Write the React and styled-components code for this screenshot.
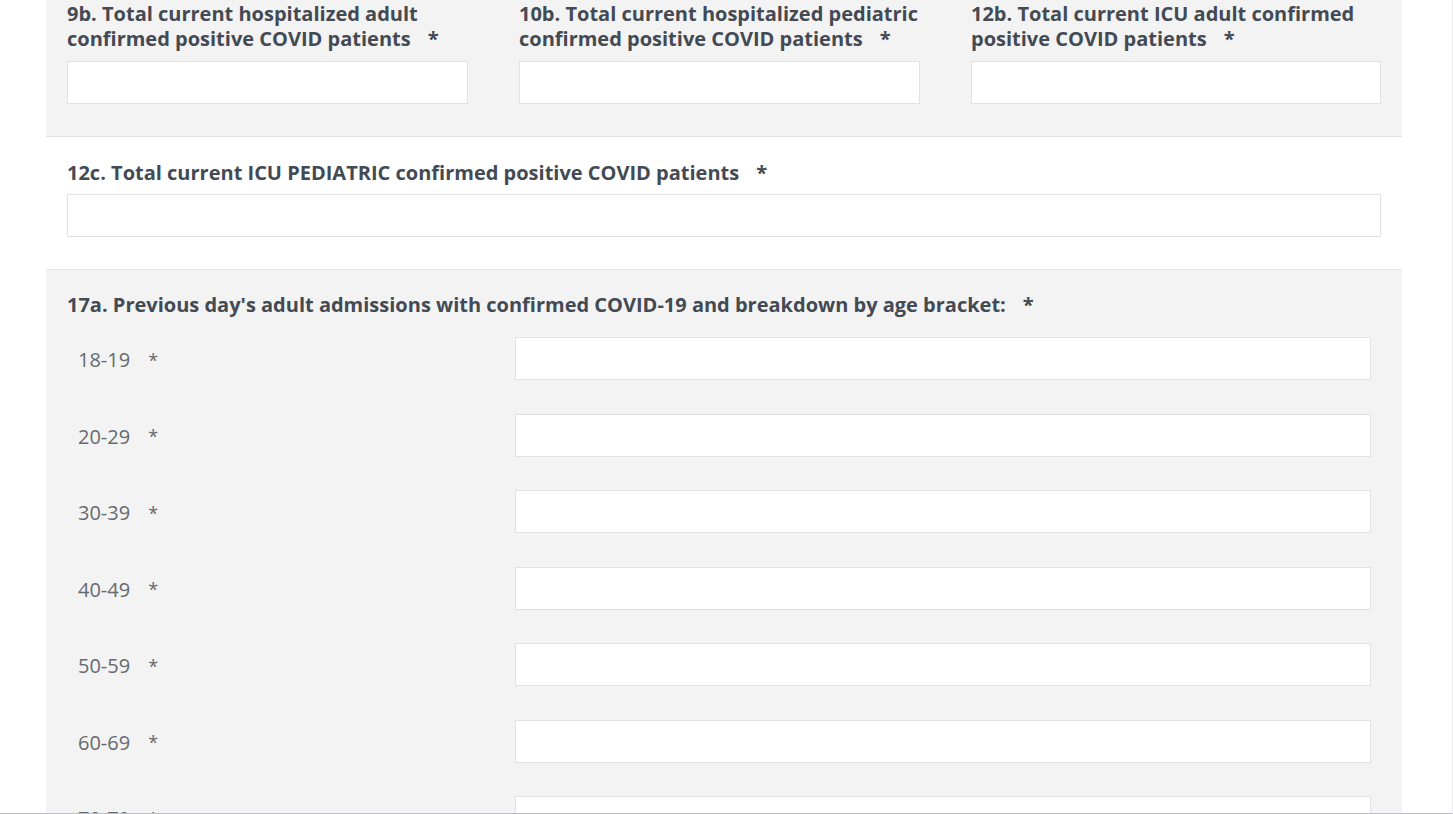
import React from "react";
import styled, { createGlobalStyle } from "styled-components";

const Global = createGlobalStyle`
  html, body { margin: 0; padding: 0; background: #ffffff; }
  body { font-family: "Open Sans", "Noto Sans", sans-serif; overflow: hidden; }
  * { box-sizing: border-box; }
`;

const Viewport = styled.div`
  height: 814px;
  overflow: hidden;
  border-right: 1px solid #efefef;
  border-bottom: 1px solid #bdbdc5;
`;

const Form = styled.div`
  width: 1356px;
  margin-left: 46px;
`;

const Section = styled.section`
  background: ${(p) => (p.$shaded ? "#f3f3f3" : "#ffffff")};
  border-bottom: ${(p) => (p.$divider ? "1px solid #e4e4e4" : "none")};
  padding: ${(p) => p.$pad};
`;

const ThreeCols = styled.div`
  display: grid;
  grid-template-columns: repeat(3, 1fr);
`;

const Col = styled.div`
  padding: 0 ${(p) => (p.$last ? "21px" : "30px")} 0 21px;
`;

const Question = styled.div`
  font-weight: 700;
  font-size: 20px;
  line-height: 25px;
  color: #434a54;
  margin-bottom: ${(p) => p.$mb || "10px"};
`;

const Star = styled.span`
  margin-left: 17px;
`;

const Input = styled.input`
  display: block;
  width: 100%;
  height: 43px;
  background: #ffffff;
  border: 1px solid #e2e2e2;
  outline: none;
  font-family: inherit;
  font-size: 16px;
  padding: 0 10px;
`;

const Rows = styled.div`
  display: grid;
  grid-template-columns: 448px 1fr;
  row-gap: 33.5px;
  padding-right: 31px;
`;

const RowLabel = styled.div`
  display: flex;
  align-items: center;
  padding-left: 11px;
  padding-top: 2px;
  font-size: 20px;
  color: #666a70;
  height: 43px;
`;

const SmallStar = styled.span`
  margin-left: 18px;
  font-size: 18px;
`;

const brackets = ["18-19", "20-29", "30-39", "40-49", "50-59", "60-69", "70-79", "80+"];

export default function App() {
  return (
    <>
      <Global />
      <Viewport>
        <Form>
          <Section $shaded $divider $pad="1px 0 32px 0">
            <ThreeCols>
              <Col>
                <Question>
                  9b. Total current hospitalized adult confirmed positive COVID patients<Star>*</Star>
                </Question>
                <Input />
              </Col>
              <Col>
                <Question>
                  10b. Total current hospitalized pediatric confirmed positive COVID patients<Star>*</Star>
                </Question>
                <Input />
              </Col>
              <Col $last>
                <Question>
                  12b. Total current ICU adult confirmed positive COVID patients<Star>*</Star>
                </Question>
                <Input />
              </Col>
            </ThreeCols>
          </Section>
          <Section $divider $pad="23px 21px 32px 21px">
            <Question $mb="9px">
              12c. Total current ICU PEDIATRIC confirmed positive COVID patients<Star>*</Star>
            </Question>
            <Input />
          </Section>
          <Section $shaded $pad="22px 0 40px 21px">
            <Question $mb="20px">
              17a. Previous day's adult admissions with confirmed COVID-19 and breakdown by age bracket:<Star>*</Star>
            </Question>
            <Rows>
              {brackets.map((b) => (
                <React.Fragment key={b}>
                  <RowLabel>
                    {b}
                    <SmallStar>*</SmallStar>
                  </RowLabel>
                  <Input />
                </React.Fragment>
              ))}
            </Rows>
          </Section>
        </Form>
      </Viewport>
    </>
  );
}
